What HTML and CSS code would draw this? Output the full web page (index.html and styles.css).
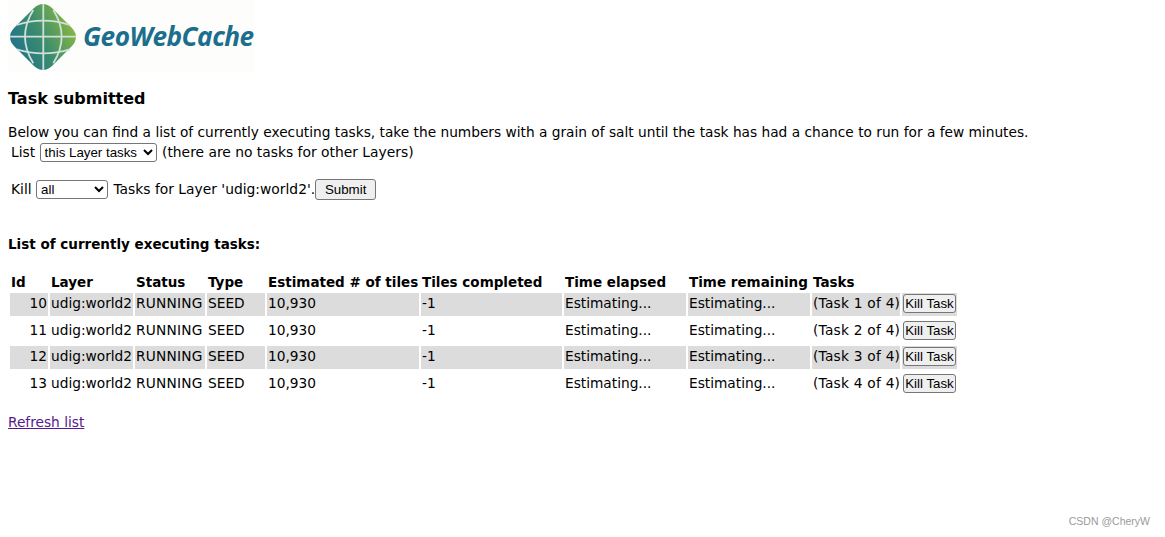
FILE: index.html
```html
<!DOCTYPE html>
<html lang="en">
<head>
    <meta charset="UTF-8">
    <title>GeoWebCache</title>
    <link rel="stylesheet" href="styles.css">
</head>
<body>
    <a class="logo" href="#">
        <svg class="logo-mark" width="66" height="66" viewBox="0 0 66 66">
            <defs>
                <linearGradient id="globe" x1="0" y1="0.8" x2="1" y2="0.3">
                    <stop offset="0" stop-color="#1a6f8e"/>
                    <stop offset="0.5" stop-color="#3c8c6e"/>
                    <stop offset="1" stop-color="#8fbc3e"/>
                </linearGradient>
            </defs>
            <path d="M24 4 Q33 -4 42 4 L62 24 Q70 33 62 42 L42 62 Q33 70 24 62 L4 42 Q-4 33 4 24 Z" fill="url(#globe)"/>
            <g fill="none" stroke="#cfe0d8" stroke-width="1.8">
                <path d="M33.3 0 V66"/>
                <path d="M0 32.7 H66"/>
                <path d="M6.7 21 Q33.3 12.4 60 21"/>
                <path d="M6.7 45.3 Q33.3 53.3 60 45.3"/>
                <path d="M23.3 6 Q6.7 32.7 23.3 59.3"/>
                <path d="M43.3 6 Q60 32.7 43.3 59.3"/>
            </g>
        </svg>
        <span class="logo-text">GeoWebCache</span>
    </a>

    <h3 class="title">Task submitted</h3>
    <p class="intro">Below you can find a list of currently executing tasks, take the numbers with a grain of salt until the task has had a chance to run for a few minutes.</p>

    <form class="line line-list">
        List
        <select class="list-select"><option>this Layer tasks</option></select>
        (there are no tasks for other Layers)
    </form>
    <form class="line line-kill">
        Kill
        <select class="kill-select"><option>all</option></select>
        Tasks for Layer 'udig:world2'.<button type="button" class="submit">Submit</button>
    </form>

    <h4 class="subtitle">List of currently executing tasks:</h4>

    <table class="tasks">
        <colgroup>
            <col class="c-id"><col class="c-layer"><col class="c-status"><col class="c-type"><col class="c-est">
            <col class="c-done"><col class="c-elapsed"><col class="c-remain"><col class="c-task"><col class="c-act">
        </colgroup>
        <thead>
            <tr>
                <th>Id</th>
                <th>Layer</th>
                <th>Status</th>
                <th>Type</th>
                <th>Estimated # of tiles</th>
                <th>Tiles completed</th>
                <th>Time elapsed</th>
                <th>Time remaining</th>
                <th colspan="2">Tasks</th>
            </tr>
        </thead>
        <tbody>
            <tr class="odd">
                <td class="num">10</td><td>udig:world2</td><td class="wide">RUNNING</td><td>SEED</td><td>10,930</td><td>-1</td><td>Estimating...</td><td>Estimating...</td><td class="wide">(Task 1 of 4)</td><td><button type="button" class="kill">Kill Task</button></td>
            </tr>
            <tr class="even">
                <td class="num">11</td><td>udig:world2</td><td class="wide">RUNNING</td><td>SEED</td><td>10,930</td><td>-1</td><td>Estimating...</td><td>Estimating...</td><td class="wide">(Task 2 of 4)</td><td><button type="button" class="kill">Kill Task</button></td>
            </tr>
            <tr class="odd">
                <td class="num">12</td><td>udig:world2</td><td class="wide">RUNNING</td><td>SEED</td><td>10,930</td><td>-1</td><td>Estimating...</td><td>Estimating...</td><td class="wide">(Task 3 of 4)</td><td><button type="button" class="kill">Kill Task</button></td>
            </tr>
            <tr class="even">
                <td class="num">13</td><td>udig:world2</td><td class="wide">RUNNING</td><td>SEED</td><td>10,930</td><td>-1</td><td>Estimating...</td><td>Estimating...</td><td class="wide">(Task 4 of 4)</td><td><button type="button" class="kill">Kill Task</button></td>
            </tr>
        </tbody>
    </table>

    <p class="refresh"><a href="#">Refresh list</a></p>

    <div class="watermark">CSDN @CheryW</div>
</body>
</html>
```

FILE: styles.css
```css
html, body {
    height: 537px;
    overflow: hidden;
}
body {
    font-family: 'DejaVu Sans', Verdana, sans-serif;
    font-size: 13.72px;
    line-height: 17px;
    color: #000;
    background: #fff;
    margin: 0;
    padding: 0 8px;
    position: relative;
}
.logo {
    display: flex;
    align-items: center;
    gap: 7px;
    width: 246px;
    height: 72px;
    padding-left: 2px;
    box-sizing: border-box;
    background: #fdfdfb;
    text-decoration: none;
}
.logo-mark {
    flex: none;
    margin-top: 2px;
}
.logo-text {
    font-family: 'Open Sans', sans-serif;
    font-style: italic;
    font-weight: 700;
    font-size: 26.2px;
    letter-spacing: -0.5px;
    color: #1b6f8c;
}
.title {
    font-size: 16px;
    line-height: 20px;
    margin: 17px 0 0;
}
.intro {
    margin: 14px 0 0;
    line-height: 18px;
    white-space: nowrap;
}
.line {
    font-size: 13.85px;
    padding-left: 3px;
    margin: 0;
}
.line-list {
    margin-top: 2px;
}
.line-kill {
    margin-top: 17px;
}
select {
    font-family: 'Liberation Sans', Arial, sans-serif;
    font-size: 13.3px;
    height: 19px;
    padding: 0;
    margin-right: 1px;
    background: #fff;
    border: 1px solid #767676;
    border-radius: 3px;
    vertical-align: baseline;
}
.list-select {
    width: 117px;
}
.kill-select {
    width: 72px;
}
.submit {
    font-family: 'Liberation Sans', Arial, sans-serif;
    font-size: 13.3px;
    width: 61px;
    height: 21px;
    padding: 0;
    background: #efefef;
    border: 1px solid #767676;
    border-radius: 3px;
}
.subtitle {
    font-size: 13.5px;
    line-height: 17px;
    margin: 36px 0 0;
}
.tasks {
    margin-top: 18px;
    border-collapse: separate;
    border-spacing: 2px;
    table-layout: fixed;
    width: 951px;
}
.tasks th {
    text-align: left;
    font-size: 13.5px;
    padding: 1px 1px 0;
    line-height: 17px;
    white-space: nowrap;
}
.tasks td {
    padding: 1px 1px 3px;
    box-sizing: border-box;
    white-space: nowrap;
}
.odd td {
    background: #dcdcdc;
    height: 23px;
}
.even td {
    height: 26px;
}
.c-id { width: 38px; }
.c-layer { width: 83px; }
.c-status { width: 70px; }
.c-type { width: 58px; }
.c-est { width: 152px; }
.c-done { width: 141px; }
.c-elapsed { width: 122px; }
.c-remain { width: 122px; }
.c-task { width: 88px; }
.c-act { width: 55px; }
.tasks .num {
    text-align: right;
}
.tasks .wide {
    letter-spacing: 0.24px;
}
.kill {
    display: block;
    font-family: 'Liberation Sans', Arial, sans-serif;
    font-size: 13.3px;
    width: 53px;
    height: 19px;
    padding: 0;
    background: #efefef;
    border: 1px solid #767676;
    border-radius: 3px;
}
.refresh {
    margin: 15px 0 0;
}
.refresh a {
    color: #551a8b;
}
.watermark {
    position: absolute;
    right: 15px;
    top: 514px;
    font-family: 'Liberation Sans', Arial, sans-serif;
    font-size: 10.5px;
    line-height: 14px;
    color: #9a9a9a;
}
```
